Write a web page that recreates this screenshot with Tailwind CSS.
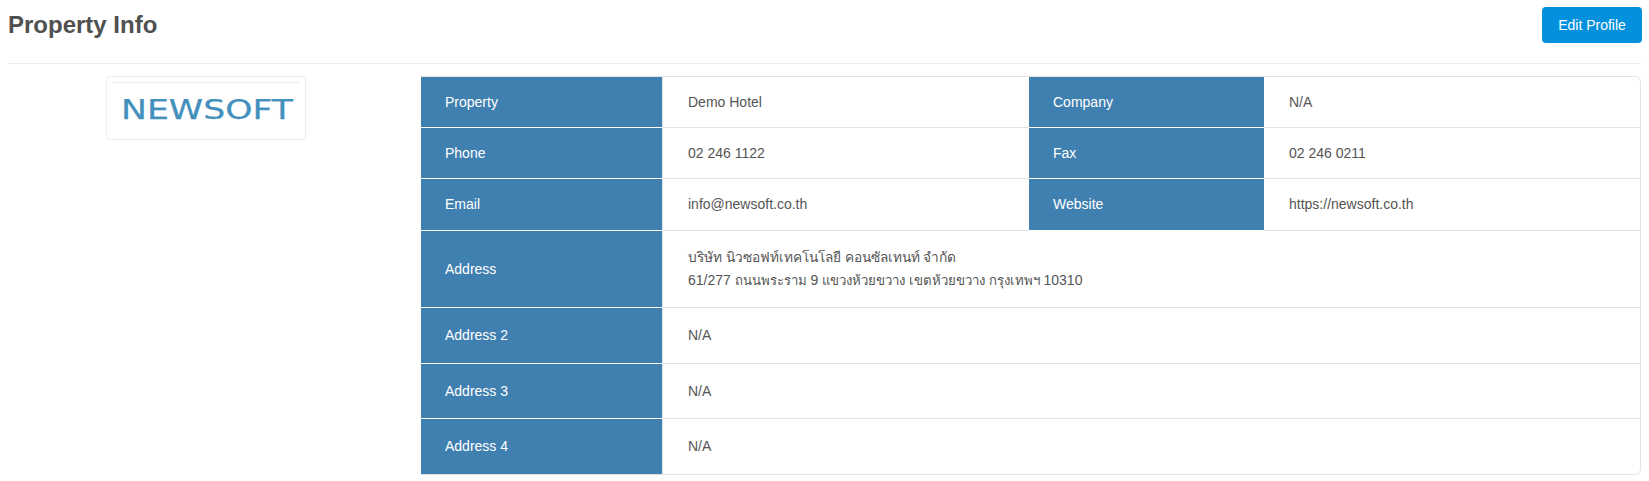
<!DOCTYPE html>
<html class="bg-white">
<head>
    <meta charset="UTF-8">
    <script src="https://cdn.jsdelivr.net/npm/@tailwindcss/browser@4"></script>
</head>
<body class="font-['Liberation_Sans',sans-serif] text-[14px] text-[#555555]">
<main class="px-2">
    <div class="flex items-start justify-between h-[64px] pt-[7px] border-b border-[#eeeeee]">
        <h1 class="text-[24px] leading-[36px] font-bold text-[#505050]">Property Info</h1>
        <button class="w-[100px] h-[36px] mr-[-1px] rounded-[4px] bg-[#0390dd] text-white text-[14px]">Edit Profile</button>
    </div>
    <div class="flex items-start pt-[12px]">
        <div class="w-[413px] shrink-0 pl-[98px]">
            <div class="w-[200px] h-[64px] rounded-[4px] border border-[#eeeeee] px-[5px] pt-[5px]">
                <div class="border-t border-[#eeeeee]">
                    <svg class="block" width="188" height="50" viewBox="0 0 188 50">
                        <text x="9" y="35.5" textLength="172" lengthAdjust="spacingAndGlyphs" fill="#4390bd" stroke="#4390bd" stroke-width="0.25" font-family="DejaVu Sans" font-size="27">NEWSOFT</text>
                    </svg>
                </div>
            </div>
        </div>
        <div class="w-[1220px] rounded-r-[6px] border-y border-r border-[#e3e3e3] overflow-hidden">
            <div class="flex h-[51px]">
                <div class="w-[241px] shrink-0 flex items-center bg-[#3f80b0] border-b border-white px-6 text-white">Property</div>
                <div class="w-[367px] shrink-0 flex items-center border-l border-b border-[#e3e3e3] pl-[25px]">Demo Hotel</div>
                <div class="w-[235px] shrink-0 flex items-center bg-[#3f80b0] border-b border-white px-6 text-white">Company</div>
                <div class="grow flex items-center border-b border-[#e3e3e3] pl-[25px]">N/A</div>
            </div>
            <div class="flex h-[51px]">
                <div class="w-[241px] shrink-0 flex items-center bg-[#3f80b0] border-b border-white px-6 text-white">Phone</div>
                <div class="w-[367px] shrink-0 flex items-center border-l border-b border-[#e3e3e3] pl-[25px]">02 246 1122</div>
                <div class="w-[235px] shrink-0 flex items-center bg-[#3f80b0] border-b border-white px-6 text-white">Fax</div>
                <div class="grow flex items-center border-b border-[#e3e3e3] pl-[25px]">02 246 0211</div>
            </div>
            <div class="flex h-[52px]">
                <div class="w-[241px] shrink-0 flex items-center bg-[#3f80b0] border-b border-white px-6 text-white">Email</div>
                <div class="w-[367px] shrink-0 flex items-center border-l border-b border-[#e3e3e3] pl-[25px]">info@newsoft.co.th</div>
                <div class="w-[235px] shrink-0 flex items-center bg-[#3f80b0] border-b border-white px-6 text-white">Website</div>
                <div class="grow flex items-center border-b border-[#e3e3e3] pl-[25px]">https://newsoft.co.th</div>
            </div>
            <div class="flex h-[77px]">
                <div class="w-[241px] shrink-0 flex items-center bg-[#3f80b0] border-b border-white px-6 text-white">Address</div>
                <div class="grow flex flex-col justify-center border-l border-b border-[#e3e3e3] pl-[25px] leading-[22px]">
                    <span class="text-[13.7px]">บริษัท นิวซอฟท์เทคโนโลยี คอนซัลเทนท์ จำกัด</span>
                    <span>61/277 <span class="text-[13.2px]">ถนนพระราม</span> 9 <span class="text-[13.2px]">แขวงห้วยขวาง เขตห้วยขวาง กรุงเทพฯ</span> 10310</span>
                </div>
            </div>
            <div class="flex h-[56px]">
                <div class="w-[241px] shrink-0 flex items-center bg-[#3f80b0] border-b border-white px-6 text-white">Address 2</div>
                <div class="grow flex items-center border-l border-b border-[#e3e3e3] pl-[25px]">N/A</div>
            </div>
            <div class="flex h-[55px]">
                <div class="w-[241px] shrink-0 flex items-center bg-[#3f80b0] border-b border-white px-6 text-white">Address 3</div>
                <div class="grow flex items-center border-l border-b border-[#e3e3e3] pl-[25px]">N/A</div>
            </div>
            <div class="flex h-[55px]">
                <div class="w-[241px] shrink-0 flex items-center bg-[#3f80b0] px-6 text-white">Address 4</div>
                <div class="grow flex items-center border-l border-[#e3e3e3] pl-[25px]">N/A</div>
            </div>
        </div>
    </div>
</main>
</body>
</html>
